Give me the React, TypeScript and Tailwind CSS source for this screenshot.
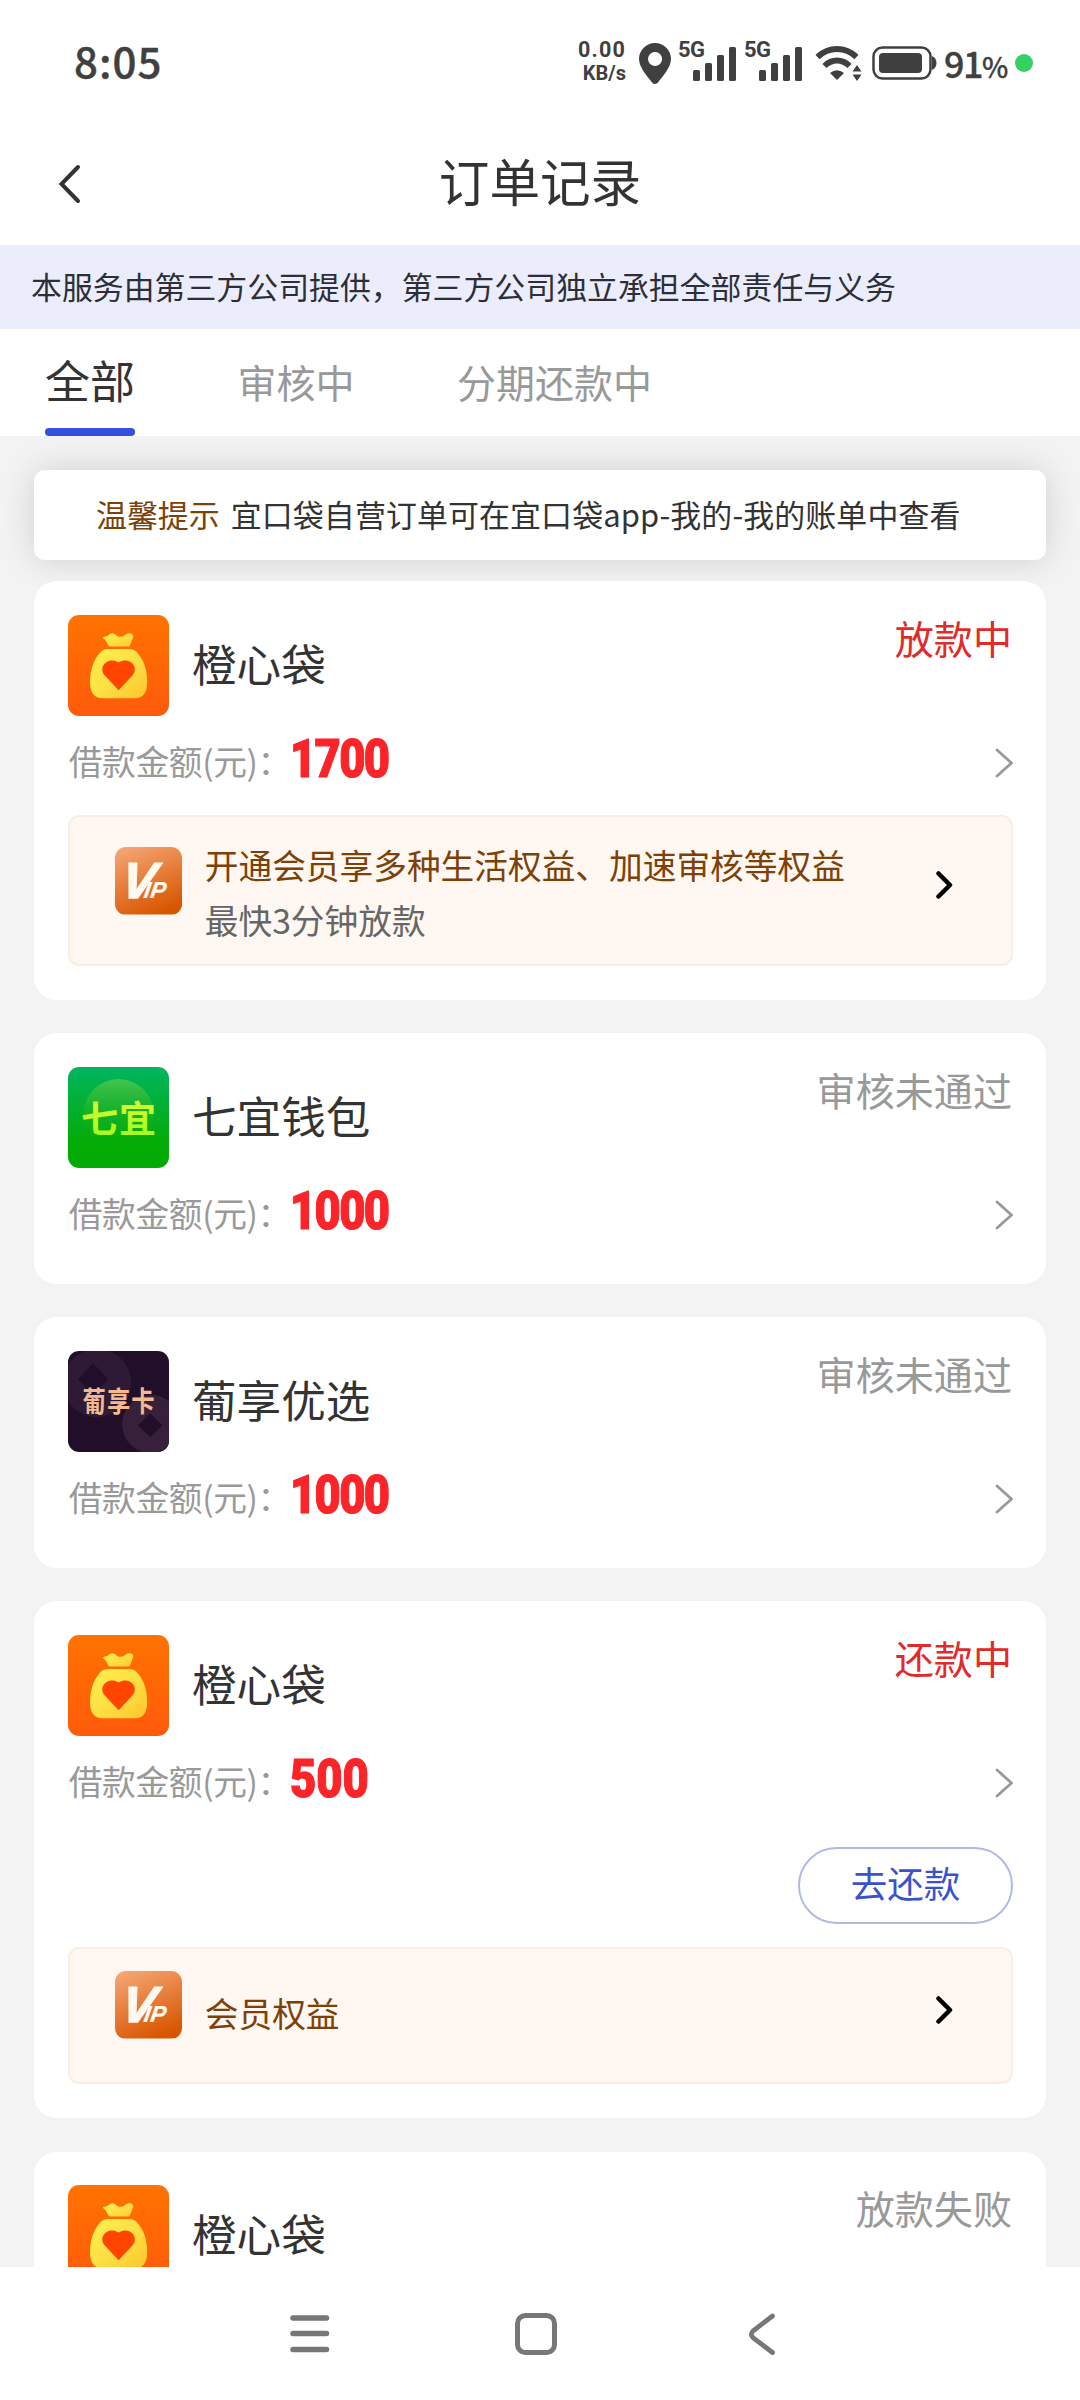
import type { ReactNode } from "react";
import clsx from "clsx";

type Brand = "orange" | "green" | "purple";

type Order = {
  id: number;
  brand: Brand;
  name: string;
  status: string;
  active?: boolean;
  amount: string;
  action?: string;
  vip?: { title: string; desc?: string };
};

const tabs = ["全部", "审核中", "分期还款中"];

const orders: Order[] = [
  {
    id: 1,
    brand: "orange",
    name: "橙心袋",
    status: "放款中",
    active: true,
    amount: "1700",
    vip: { title: "开通会员享多种生活权益、加速审核等权益", desc: "最快3分钟放款" },
  },
  { id: 2, brand: "green", name: "七宜钱包", status: "审核未通过", amount: "1000" },
  { id: 3, brand: "purple", name: "葡享优选", status: "审核未通过", amount: "1000" },
  {
    id: 4,
    brand: "orange",
    name: "橙心袋",
    status: "还款中",
    active: true,
    amount: "500",
    action: "去还款",
    vip: { title: "会员权益" },
  },
  { id: 5, brand: "orange", name: "橙心袋", status: "放款失败", amount: "" },
];

function OrangeLogo() {
  return (
    <svg viewBox="0 0 101 101" className="size-full">
      <defs>
        <linearGradient id="orange-bg" x1="0" y1="0" x2="0" y2="1">
          <stop offset="0" stopColor="#ff7300" />
          <stop offset="1" stopColor="#ff5a0c" />
        </linearGradient>
        <linearGradient id="orange-bag" x1="0" y1="0" x2="1" y2="1">
          <stop offset="0" stopColor="#fff04a" />
          <stop offset="0.5" stopColor="#fde045" />
          <stop offset="1" stopColor="#fdc62c" />
        </linearGradient>
      </defs>
      <rect width="101" height="101" fill="url(#orange-bg)" />
      <path
        d="M35 23c-1-1.500 3-1 5-2.500 3-3 5.500-3 8.500 0 2.500 2 5.500 1.500 8 0 2.500-3 6-3 8-1 1.500 2 0 4-1 6.500l-1.500 4q-.4 1.500-2 1.500H42q-1.500 0-2-1.500-1-4-5-7z"
        fill="url(#orange-bag)"
      />
      <path
        d="M39 34h23q3.500 0 6 2.500C75.500 44 79 55 79 67q0 16-12.500 16h-32Q22 83 22 67c0-12 3.500-23 11-30.500Q35.500 34 39 34z"
        fill="url(#orange-bag)"
      />
      <path
        d="M50.500 75L37 60.500c-8-8 3-20 13.500-13 10.500-7 21.500 5 13.500 13z"
        fill="#ff4500"
      />
    </svg>
  );
}

function GreenLogo() {
  return (
    <svg viewBox="0 0 101 101" className="size-full">
      <defs>
        <linearGradient id="green-bg" x1="0" y1="0" x2="0" y2="1">
          <stop offset="0" stopColor="#00b560" />
          <stop offset="0.75" stopColor="#05ab06" />
          <stop offset="1" stopColor="#04aa04" />
        </linearGradient>
        <linearGradient id="green-disc" x1="0" y1="0" x2="0" y2="1">
          <stop offset="0" stopColor="#4fc44e" stopOpacity="0.9" />
          <stop offset="0.75" stopColor="#1aae10" stopOpacity="0.1" />
          <stop offset="1" stopColor="#1aae10" stopOpacity="0" />
        </linearGradient>
        <linearGradient id="green-text" x1="0" y1="0" x2="0" y2="1">
          <stop offset="0" stopColor="#e6f53c" />
          <stop offset="1" stopColor="#9dff12" />
        </linearGradient>
      </defs>
      <rect width="101" height="101" fill="url(#green-bg)" />
      <circle cx="50.5" cy="47" r="35" fill="url(#green-disc)" />
      <text
        x="13"
        y="66"
        fontSize="37"
        fontWeight="700"
        textLength="75"
        fill="url(#green-text)"
      >
        七宜
      </text>
    </svg>
  );
}

function PurpleLogo() {
  return (
    <svg viewBox="0 0 101 101" className="size-full">
      <rect width="101" height="101" fill="#210e28" />
      <path
        fillRule="evenodd"
        d="M29-2a34 34 0 1 1-.1 0zM25 12L10 28l15 16 15-16z"
        fill="#2f1a35"
      />
      <path
        fillRule="evenodd"
        d="M83 44a29 29 0 1 1-.1 0zM82 62L70 74l12 12 12-12z"
        fill="#36203a"
      />
      <text
        x="15"
        y="50"
        fontSize="24"
        fontWeight="700"
        letterSpacing="1"
        fill="#f3b98f"
        transform="translate(0 1) scale(0.97 1.2)"
      >
        葡享卡
      </text>
    </svg>
  );
}

function VipLogo() {
  return (
    <svg viewBox="0 0 67 67" className="size-[67.5px] shrink-0 rounded-[11px]">
      <defs>
        <linearGradient id="vip-bg" x1="0.2" y1="0" x2="0.6" y2="1">
          <stop offset="0" stopColor="#f4a472" />
          <stop offset="1" stopColor="#d85600" />
        </linearGradient>
      </defs>
      <rect width="67" height="67" fill="url(#vip-bg)" />
      <text
        x="5"
        y="51"
        fontSize="50"
        fontFamily="Liberation Sans"
        fontStyle="italic"
        fontWeight="700"
        fill="#fff9f0"
        stroke="#fff9f0"
        strokeWidth="1.5"
        transform="translate(7.5 0) skewX(-9)"
      >
        V
        <tspan dx="-10" fontSize="23" strokeWidth="0.2">
          IP
        </tspan>
      </text>
    </svg>
  );
}

const logos: Record<Brand, () => ReactNode> = {
  orange: OrangeLogo,
  green: GreenLogo,
  purple: PurpleLogo,
};

function Signal() {
  return (
    <div className="flex h-[40px] items-start">
      <span className="w-[15px] whitespace-nowrap font-['Roboto'] text-[22px] font-bold leading-[16px] tracking-[-0.5px]">
        5G
      </span>
      <svg viewBox="0 0 43 36" className="mt-[4px] h-[36px] w-[43px]" fill="#404040">
        <rect x="0" y="24" width="7" height="11" rx="1.5" />
        <rect x="12" y="17" width="7" height="18" rx="1.5" />
        <rect x="24" y="9" width="7" height="26" rx="1.5" />
        <rect x="36" y="1" width="7" height="34" rx="1.5" />
      </svg>
    </div>
  );
}

function StatusBar() {
  return (
    <div className="flex h-[126px] items-center text-[#404040]">
      <span className="mb-[6px] ml-[74px] text-[42px] font-medium leading-none tracking-[1px] [-webkit-text-stroke:0.4px_#404040]">
        8:05
      </span>
      <div className="mb-[4px] ml-auto flex w-[50px] flex-col pr-[2px] text-right font-['Roboto'] text-[21.5px] font-bold leading-[24px]">
        <span className="tracking-[1.2px]">0.00</span>
        <span className="text-[20px] leading-[23px]">KB/s</span>
      </div>
      <svg viewBox="0 0 32 41" className="ml-[11px] h-[41px] w-[32px]" fill="#404040">
        <path
          fillRule="evenodd"
          d="M16 0a16 16 0 0 1 16 16c0 8-8 17-13.500 24q-2.500 2-5 0C8 33 0 24 0 16A16 16 0 0 1 16 0zm0 9a7 7 0 1 0 .1 0z"
        />
      </svg>
      <div className="ml-[7px] mt-[-2px]">
        <Signal />
      </div>
      <div className="ml-[8px] mt-[-2px]">
        <Signal />
      </div>
      <svg viewBox="0 0 48 36" className="mb-[1px] ml-[13px] h-[36px] w-[48px]" fill="none" stroke="#404040">
        <path d="M2.500 12Q11 4 22 4t19.500 8" strokeWidth="6" />
        <path d="M9.500 21q5.500-5.500 12.500-5.500t12.500 5.500" strokeWidth="6" />
        <path d="M22 35l-7-7q7-5.500 14 0z" fill="#404040" stroke="none" />
        <path d="M42 20l4.500 6.500h-9zM42 36l-4.500-6.500h9z" fill="#404040" stroke="none" />
      </svg>
      <svg viewBox="0 0 65 34" className="ml-[9px] h-[34px] w-[65px]">
        <rect x="1.500" y="1.500" width="57" height="31" rx="9" fill="none" stroke="#404040" strokeWidth="2.500" />
        <rect x="7" y="7" width="43" height="20" rx="4" fill="#404040" />
        <path d="M60 10q4.500 2 4.500 7T60 24z" fill="#404040" />
      </svg>
      <span className="mb-[3px] ml-[7px] w-[62px] whitespace-nowrap font-medium leading-none [-webkit-text-stroke:0.3px_#404040]">
        <span className="text-[36px] tracking-[-1.5px]">91</span>
        <span className="text-[28px]">%</span>
      </span>
      <span className="ml-[9px] mr-[47px] size-[18px] rounded-full bg-[#33d363]" />
    </div>
  );
}

function VipBanner({ title, desc }: { title: string; desc?: string }) {
  return (
    <div
      className={clsx(
        "flex items-start rounded-[11px] border-2 border-[#fbede1] bg-[#fff7f1] pl-[45px] pr-[58px] text-[33.7px]",
        desc ? "mt-[11px] h-[151px] pt-[30px]" : "mt-[23px] h-[137px] pt-[22px]"
      )}
    >
      <VipLogo />
      <div className={clsx("ml-[22.5px] flex-1 whitespace-nowrap", desc ? "mt-[-9px]" : "mt-[15px]")}>
        <p className="leading-[54px] text-[#7d4107]">{title}</p>
        {desc && <p className="leading-[55px] text-[#666]">{desc}</p>}
      </div>
      <svg
        viewBox="0 0 18 30"
        className={clsx("h-[30px] w-[18px]", desc ? "mt-[23px]" : "mt-[24px]")}
        fill="none"
        stroke="#000"
        strokeWidth="4.5"
        strokeLinecap="round"
        strokeLinejoin="round"
      >
        <path d="M3.500 3.500L15 15 3.500 26.500" />
      </svg>
    </div>
  );
}

function OrderCard({ order }: { order: Order }) {
  const Logo = logos[order.brand];
  return (
    <div
      className={clsx(
        "rounded-[22.5px] bg-white pl-[33.75px] pr-[33px] pt-[33.75px]",
        order.vip ? "pb-[33.75px]" : "pb-[27.5px]"
      )}
    >
      <div className="flex h-[101.25px] items-start">
        <div className="size-[101.25px] overflow-hidden rounded-[11.25px]">
          <Logo />
        </div>
        <span className="ml-[23px] text-[44.6px] leading-[96px] text-[#333]">{order.name}</span>
        <span
          className={clsx(
            "ml-auto mr-[1px] text-[39.1px] leading-[45px]",
            order.active ? "text-[#e02b2b]" : "text-[#999]"
          )}
        >
          {order.status}
        </span>
      </div>

      {order.amount && (
        <div className="flex h-[88px] items-center">
          <span className="ml-[1px] mt-[2px] w-[221px] whitespace-nowrap text-[33.75px] leading-none tracking-[-0.4px] text-[#999]">
            借款金额(元)：
          </span>
          <span
            className={clsx(
              "mb-[2px] origin-left scale-x-[0.84] font-['Roboto'] text-[54px] font-black leading-none text-[#fa2429] [-webkit-text-stroke:1.2px_#fa2429]",
              order.amount.length > 3 && "tracking-[-2px]"
            )}
          >
            {order.amount}
          </span>
          <svg
            viewBox="0 0 18 30"
            className="ml-auto mt-[6px] h-[30px] w-[18px]"
            fill="none"
            stroke="#999"
            strokeWidth="2.8"
            strokeLinecap="round"
          >
            <path d="M2 2l14.500 13L2 28" />
          </svg>
        </div>
      )}

      {order.action && (
        <div className="mt-[23px] flex justify-end">
          <button className="h-[77px] w-[215px] rounded-full border-2 border-[#b1b9e6] pb-[5px] text-[36.56px] leading-none text-[#3b52cc]">
            {order.action}
          </button>
        </div>
      )}

      {order.vip && <VipBanner {...order.vip} />}
    </div>
  );
}

function NavBar() {
  return (
    <div className="relative flex h-[133px] shrink-0 items-center bg-white">
      <svg viewBox="0 0 42 42" className="ml-[289px] size-[42px]" stroke="#777" strokeWidth="5.5" strokeLinecap="round">
        <path d="M4 5h33.500M4 20.500h33.500M4 36.500h33.500" />
      </svg>
      <svg viewBox="0 0 42 42" className="ml-[184px] size-[42px]" fill="none" stroke="#777" strokeWidth="5">
        <rect x="2.500" y="2.500" width="37" height="37" rx="8" />
      </svg>
      <svg
        viewBox="0 0 28 42"
        className="ml-[191px] h-[42px] w-[28px]"
        fill="none"
        stroke="#777"
        strokeWidth="4.8"
        strokeLinecap="round"
      >
        <path d="M24.500 3L5.500 17.500q-4.500 3.800 0 7.600L24.500 39.500" />
      </svg>
    </div>
  );
}

export default function App() {
  return (
    <div className="flex h-[2400px] w-[1080px] flex-col overflow-hidden bg-[#f3f3f3] font-['Noto_Sans_CJK_SC',sans-serif]">
      <div className="shrink-0 bg-white">
        <StatusBar />

        {/* Header */}
        <div className="flex h-[119px] items-center">
          <svg
            viewBox="0 0 24 42"
            className="mb-[3px] ml-[58px] h-[42px] w-[24px]"
            fill="none"
            stroke="#333"
            strokeWidth="4"
            strokeLinecap="round"
          >
            <path d="M20 4L3.500 21 20 38" />
          </svg>
          <h1 className="mb-[11px] mr-[82px] flex-1 text-center text-[50.6px] leading-none text-[#333]">
            订单记录
          </h1>
        </div>

        <div className="h-[84px] bg-[#ebedfc] pl-[31px] text-[30.9px] leading-[81px] text-[#2d2f36]">
          本服务由第三方公司提供，第三方公司独立承担全部责任与义务
        </div>

        {/* Tabs */}
        <div className="flex h-[107px] gap-[102.5px] pl-[45px]">
          {tabs.map((tab, i) => (
            <div key={tab} className="flex flex-col justify-between">
              <span
                className={clsx(
                  i === 0 ? "text-[45px] leading-[101px] text-[#333]" : "text-[39px] leading-[105px] text-[#999]"
                )}
              >
                {tab}
              </span>
              {i === 0 && <div className="mt-[-2px] h-[8px] shrink-0 rounded-full bg-[#3350e0]" />}
            </div>
          ))}
        </div>
      </div>

      {/* Order list */}
      <div className="min-h-0 flex-1 px-[34px] pt-[34px]">
        <div className="h-[90px] whitespace-nowrap rounded-[11px] bg-white pl-[62px] text-[30.94px] leading-[87px] text-[#333] shadow-[0_0_34px_rgba(0,0,0,0.15)]">
          <span className="mr-[11px] text-[#7d4107]">温馨提示</span>
          <span className="tracking-[0.1px]">宜口袋自营订单可在宜口袋app-我的-我的账单中查看</span>
        </div>
        <div className="relative mt-[21px] flex flex-col gap-[33.5px]">
          {orders.map((order) => (
            <OrderCard key={order.id} order={order} />
          ))}
        </div>
      </div>

      <NavBar />
    </div>
  );
}
